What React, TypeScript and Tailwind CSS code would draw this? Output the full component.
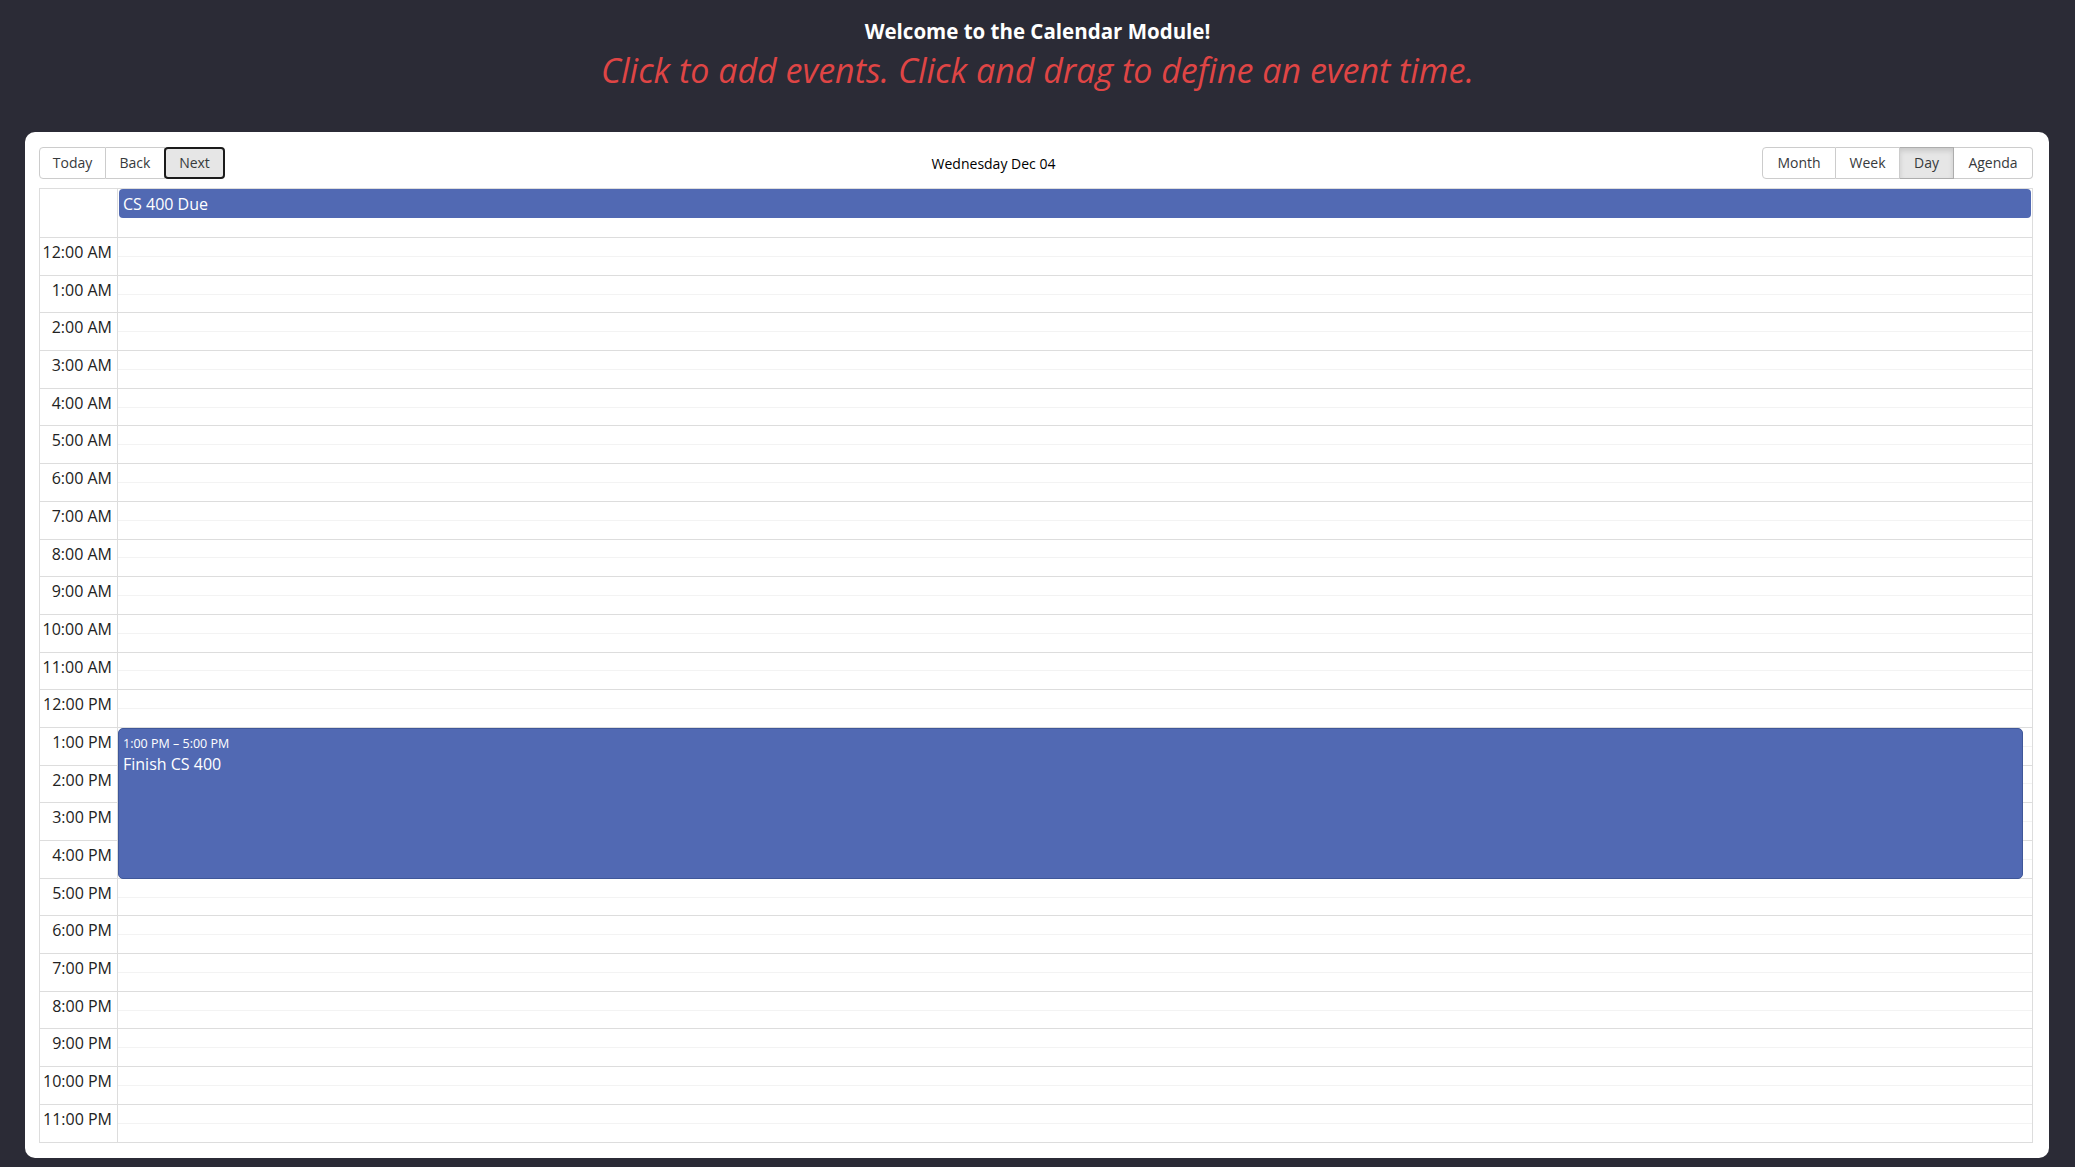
const hours = [
  "12:00 AM", "1:00 AM", "2:00 AM", "3:00 AM", "4:00 AM", "5:00 AM",
  "6:00 AM", "7:00 AM", "8:00 AM", "9:00 AM", "10:00 AM", "11:00 AM",
  "12:00 PM", "1:00 PM", "2:00 PM", "3:00 PM", "4:00 PM", "5:00 PM",
  "6:00 PM", "7:00 PM", "8:00 PM", "9:00 PM", "10:00 PM", "11:00 PM",
];

const Toolbar = () => (
  <div className="flex items-center h-[32px] mb-[9px] text-[14px] text-[#373a3c]">
    <div className="flex">
      <button className="w-[67px] h-[32px] border border-[#ccc] rounded-l-[4px] leading-none">
        Today
      </button>
      <button className="w-[59px] h-[32px] border border-l-0 border-[#ccc] leading-none">
        Back
      </button>
      <button className="w-[61px] h-[32px] border-2 border-[#1b1b1b] -ml-px rounded-[4px] bg-[#e6e6e6] leading-none">
        Next
      </button>
    </div>
    <div className="flex-1 text-center text-black">Wednesday Dec 04</div>
    <div className="flex">
      <button className="w-[74px] h-[32px] border border-[#ccc] rounded-l-[4px] leading-none">
        Month
      </button>
      <button className="w-[64px] h-[32px] border border-l-0 border-[#ccc] leading-none">
        Week
      </button>
      <button className="w-[54px] h-[32px] border border-l-0 border-[#adadad] bg-[#e6e6e6] shadow-[inset_0_3px_5px_rgba(0,0,0,0.125)] leading-none">
        Day
      </button>
      <button className="w-[79px] h-[32px] border border-l-0 border-[#ccc] rounded-r-[4px] leading-none">
        Agenda
      </button>
    </div>
  </div>
);

const DayView = () => (
  <div className="flex-1 flex flex-col border border-[#ddd] min-h-0">
    <div className="flex h-[49px] border-b border-[#ddd] shrink-0">
      <div className="w-[78px] border-r border-[#ddd] shrink-0" />
      <div className="flex-1 px-px">
        <div className="h-[29px] bg-[#5169b3] rounded-[4px] px-[4px] flex items-center text-white text-[16px]">
          CS 400 Due
        </div>
      </div>
    </div>
    <div className="flex flex-1">
      <div className="w-[78px] border-r border-[#ddd] shrink-0">
        {hours.map((h) => (
          <div key={h} className="h-[37.7px] border-b border-[#ddd] text-right pr-[5px] pt-[5px] text-[16px] leading-[19px] text-[#222]">
            {h}
          </div>
        ))}
      </div>
      <div className="flex-1 relative">
        {hours.map((h) => (
          <div key={h} className="h-[37.7px] border-b border-[#ddd] flex flex-col">
            <div className="flex-1" />
            <div className="flex-1 border-t border-[#f3f3f3]" />
          </div>
        ))}
        <div className="absolute left-0 right-[9px] top-[490px] h-[151px] bg-[#5169b3] border border-[#3f5799] rounded-[5px] px-[4px] pt-[7px] text-white">
          <div className="text-[12.5px] leading-[16px]">1:00 PM – 5:00 PM</div>
          <div className="text-[16px] leading-[20px] mt-[2px]">Finish CS 400</div>
        </div>
      </div>
    </div>
  </div>
);

export default function App() {
  return (
    <div className="h-screen bg-[#2b2b36] [font-family:'Open_Sans',sans-serif] flex flex-col overflow-hidden">
      <header className="text-center pt-[18px] h-[132px] shrink-0">
        <h1 className="text-white font-bold text-[20.5px] leading-[26px]">
          Welcome to the Calendar Module!
        </h1>
        <p className="text-[#df4545] italic text-[34px] leading-[40px] mt-[6px]">
          Click to add events. Click and drag to define an event time.
        </p>
      </header>
      <main className="ml-[25px] mr-[26px] bg-white rounded-[10px] pl-[14px] pr-[16px] pt-[15px] pb-[15px] h-[1026px] flex flex-col">
        <Toolbar />
        <DayView />
      </main>
    </div>
  );
}
